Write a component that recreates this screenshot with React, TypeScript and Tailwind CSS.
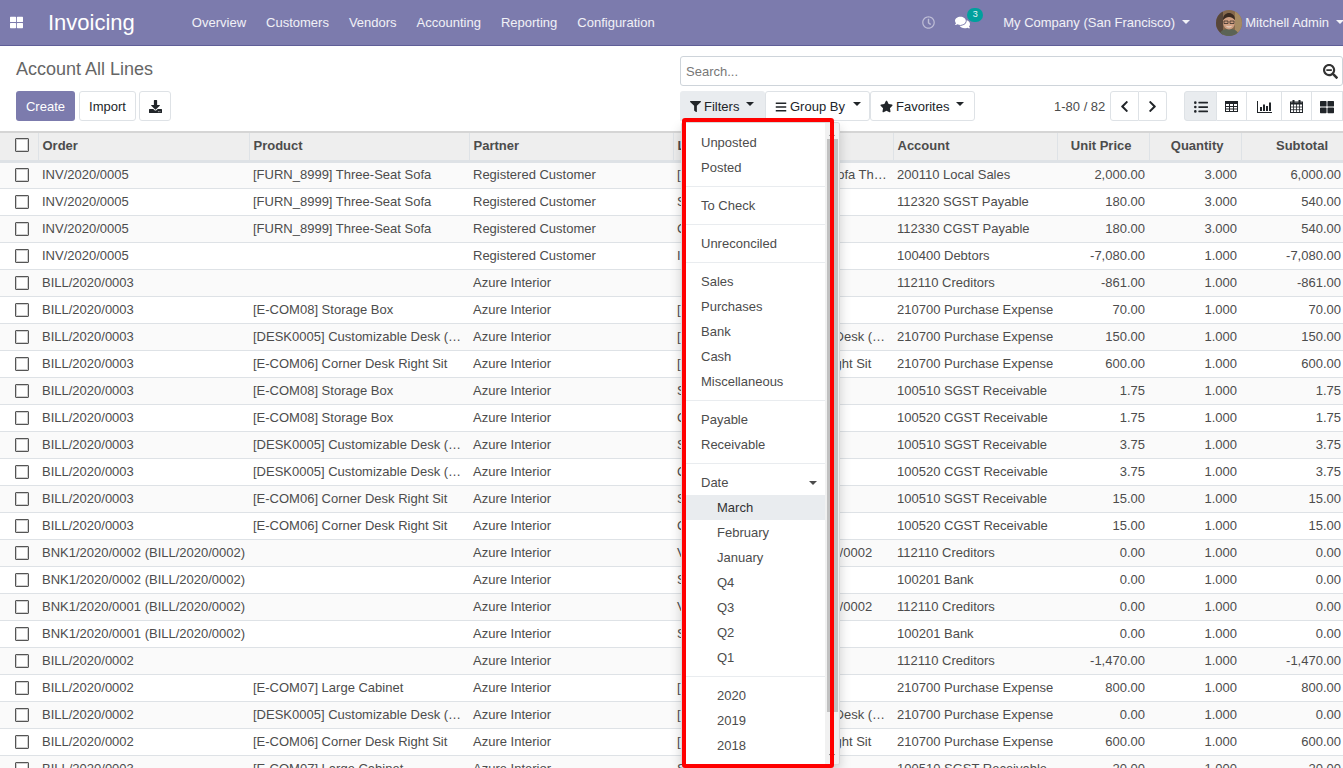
import {
  FaThLarge,
  FaRegClock,
  FaComments,
  FaDownload,
  FaSearchMinus,
  FaFilter,
  FaBars,
  FaStar,
  FaChevronLeft,
  FaChevronRight,
  FaListUl,
} from "react-icons/fa";

const navItems = ["Overview", "Customers", "Vendors", "Accounting", "Reporting", "Configuration"];

const sofa = "[FURN_8999] Three-Seat Sofa";
const box = "[E-COM08] Storage Box";
const desk = "[DESK0005] Customizable Desk (CONFIG)";
const corner = "[E-COM06] Corner Desk Right Sit";
const cabinet = "[E-COM07] Large Cabinet";
const reg = "Registered Customer";
const azure = "Azure Interior";
const inv = "INV/2020/0005";
const b3 = "BILL/2020/0003";
const b2 = "BILL/2020/0002";
const pay2 = "BNK1/2020/0002 (BILL/2020/0002)";
const pay1 = "BNK1/2020/0001 (BILL/2020/0002)";
const sgstR = "100510 SGST Receivable";
const cgstR = "100520 CGST Receivable";
const purch = "210700 Purchase Expense";
const cred = "112110 Creditors";
const bank = "100201 Bank";
const vendorPay = "Vendor Payment: BILL/2020/0002";

const rows = [
  [inv, sofa, reg, sofa + " Three Seater", "200110 Local Sales", "2,000.00", "3.000", "6,000.00"],
  [inv, sofa, reg, "SGST Sale", "112320 SGST Payable", "180.00", "3.000", "540.00"],
  [inv, sofa, reg, "CGST Sale", "112330 CGST Payable", "180.00", "3.000", "540.00"],
  [inv, "", reg, "INV/2020/0005", "100400 Debtors", "-7,080.00", "1.000", "-7,080.00"],
  [b3, "", azure, "", cred, "-861.00", "1.000", "-861.00"],
  [b3, box, azure, box, purch, "70.00", "1.000", "70.00"],
  [b3, desk, azure, desk, purch, "150.00", "1.000", "150.00"],
  [b3, corner, azure, corner, purch, "600.00", "1.000", "600.00"],
  [b3, box, azure, "SGST", sgstR, "1.75", "1.000", "1.75"],
  [b3, box, azure, "CGST", cgstR, "1.75", "1.000", "1.75"],
  [b3, desk, azure, "SGST", sgstR, "3.75", "1.000", "3.75"],
  [b3, desk, azure, "CGST", cgstR, "3.75", "1.000", "3.75"],
  [b3, corner, azure, "SGST", sgstR, "15.00", "1.000", "15.00"],
  [b3, corner, azure, "CGST", cgstR, "15.00", "1.000", "15.00"],
  [pay2, "", azure, vendorPay, cred, "0.00", "1.000", "0.00"],
  [pay2, "", azure, "SGST", bank, "0.00", "1.000", "0.00"],
  [pay1, "", azure, vendorPay, cred, "0.00", "1.000", "0.00"],
  [pay1, "", azure, "SGST", bank, "0.00", "1.000", "0.00"],
  [b2, "", azure, "", cred, "-1,470.00", "1.000", "-1,470.00"],
  [b2, cabinet, azure, cabinet, purch, "800.00", "1.000", "800.00"],
  [b2, desk, azure, desk, purch, "0.00", "1.000", "0.00"],
  [b2, corner, azure, corner, purch, "600.00", "1.000", "600.00"],
  [b3, cabinet, azure, "SGST", sgstR, "20.00", "1.000", "20.00"],
];

const menuGroups = [
  ["Unposted", "Posted"],
  ["To Check"],
  ["Unreconciled"],
  ["Sales", "Purchases", "Bank", "Cash", "Miscellaneous"],
  ["Payable", "Receivable"],
];

const dateOptions = ["March", "February", "January", "Q4", "Q3", "Q2", "Q1"];
const years = ["2020", "2019", "2018"];

function Caret() {
  return <span className="block w-0 h-0 border-x-[4px] border-t-[4px] border-x-transparent border-t-current" />;
}

function Checkbox() {
  return <span className="block w-[14px] h-[14px] border border-[#555] rounded-[1px] bg-white ml-[15px] shadow-[inset_0_0_0_1px_#cfcfcf]" />;
}

function Avatar() {
  return (
    <svg width="26" height="26" viewBox="0 0 26 26" className="rounded-full">
      <rect width="26" height="26" fill="#86694c" />
      <rect x="0" y="0" width="7" height="26" fill="#57463a" />
      <rect x="19" y="0" width="7" height="26" fill="#a58a62" />
      <path d="M3 26c1-6 5-7 10-7s9 1 10 7z" fill="#5b6355" />
      <ellipse cx="13" cy="12.5" rx="6" ry="7" fill="#cf9f82" />
      <path d="M7 10c0-5 3-7 6-7s6 2 6 7c-2-2-4-3-6-3s-4 1-6 3z" fill="#3a2a20" />
      <path d="M8 11h4v2.5H8zM14 11h4v2.5h-4z" fill="none" stroke="#3a302a" strokeWidth="0.8" />
      <path d="M10.5 16.3c1.6 0.9 3.4 0.9 5 0" stroke="#f3e6dc" strokeWidth="0.9" fill="none" />
    </svg>
  );
}

function TableIcon() {
  return (
    <svg width="13" height="11" viewBox="0 0 13 11" fill="none" stroke="currentColor" strokeWidth="1">
      <rect x="0.5" y="0.5" width="12" height="10" />
      <path d="M0 2h13" strokeWidth="2" />
      <path d="M0 5.5h13M0 8h13M4.5 2v9M8.5 2v9" />
    </svg>
  );
}

function ChartIcon() {
  return (
    <svg width="15" height="12" viewBox="0 0 15 12" fill="currentColor">
      <path d="M0 0h1v11h14v1H0z" />
      <rect x="3" y="6" width="2" height="4" />
      <rect x="6" y="3.5" width="2" height="6.5" />
      <rect x="9" y="5" width="2" height="5" />
      <rect x="12" y="1.5" width="2" height="8.5" />
    </svg>
  );
}

function CalendarIcon() {
  return (
    <svg width="13" height="13" viewBox="0 0 13 13" fill="none" stroke="currentColor" strokeWidth="1">
      <rect x="0.5" y="2" width="12" height="10.5" />
      <path d="M0 3.5h13" strokeWidth="2" />
      <path d="M0 7h13M0 9.7h13M3.5 4v9M6.5 4v9M9.5 4v9" strokeWidth="0.8" />
      <rect x="2.5" y="0" width="2" height="3.5" fill="currentColor" stroke="none" />
      <rect x="8.5" y="0" width="2" height="3.5" fill="currentColor" stroke="none" />
    </svg>
  );
}

function FiltersMenu() {
  const item = "h-[25px] flex items-center pl-[19px] whitespace-nowrap";
  const sub = "h-[25px] flex items-center pl-[35px]";
  const divider = "h-px bg-[#e9ecef] my-[6px]";
  return (
    <div className="absolute left-[1px] top-[31px] w-[159px] h-[644px] z-10">
      <div className="absolute left-0 top-[0px] w-full h-[643px] bg-white border border-black/15 rounded-[3px] shadow-[0_6px_12px_rgba(0,0,0,0.18)] flex overflow-hidden text-[13px] text-[#4c4c4c]">
        <div className="w-[143px] pt-[7px] shrink-0">
          {menuGroups.map((g) => (
            <div key={g[0]}>
              {g.map((t) => (
                <div key={t} className={item}>
                  {t}
                </div>
              ))}
              <div className={divider} />
            </div>
          ))}
          <div className={item + " justify-between pr-[8px]"}>
            Date
            <Caret />
          </div>
          {dateOptions.map((t, i) => (
            <div key={t} className={sub + (i === 0 ? " bg-[#e9ecef] text-[#333]" : "")}>
              {t}
            </div>
          ))}
          <div className={divider} />
          {years.map((t) => (
            <div key={t} className={sub}>
              {t}
            </div>
          ))}
        </div>
        <div className="flex-1 bg-[#f1f1f1] relative flex flex-col items-center">
          <span className="mt-[9px] w-0 h-0 border-x-[3px] border-b-[4px] border-x-transparent border-b-[#777]" />
          <div className="absolute left-[2px] right-[1px] top-[16px] h-[573px] bg-[#c1c1c1]" />
          <span className="absolute bottom-[6px] w-0 h-0 border-x-[3px] border-t-[4px] border-x-transparent border-t-[#555]" />
        </div>
      </div>
      {/* red highlight drawn on top of the screenshot */}
      <div className="absolute left-[1px] top-[-4px] w-[152px] h-[650px] border-[4px] border-[#f00] rounded-[3px] pointer-events-none" />
    </div>
  );
}

export default function App() {
  const box2 = "h-[30px] flex items-center border border-[#dee2e6] text-[13px] text-[#212529] pt-[1px]";
  const btn = box2 + " justify-center bg-white";
  const drop = box2 + " bg-white pl-[9px] rounded-[3px] gap-[3px]";
  const th = "h-[29px] pb-[2px] px-1 font-bold text-[13px] text-[#4c4c4c] border-l border-[#dee2e6] first:border-l-0 text-left";
  return (
    <div className="relative w-[1343px] h-[768px] overflow-hidden bg-white [font-family:'Liberation_Sans',Arial,sans-serif] text-[13px] text-[#4c4c4c]">
      {/* top bar */}
      <nav className="h-[46px] bg-[#7c7bad] border-b border-[#5f5e97] flex items-center text-white">
        <FaThLarge className="ml-[10px] w-[13px] h-[13px]" />
        <span className="ml-[25px] text-[22px] leading-none">Invoicing</span>
        <div className="ml-[47px] flex">
          {navItems.map((n) => (
            <span key={n} className="px-[10px] text-[13px] text-white/90">
              {n}
            </span>
          ))}
        </div>
        <div className="ml-auto mr-[-1px] flex items-center text-white/90">
          <FaRegClock className="w-[13px] h-[13px] text-white/50" />
          <div className="relative ml-[20px] mr-[33px]">
            <FaComments className="w-[15px] h-[15px] text-white" />
            <span className="absolute left-[12px] top-[-7px] w-[16px] h-[14px] rounded-full bg-[#00a09d] text-[9px] flex items-center justify-center">
              3
            </span>
          </div>
          <span>My Company (San Francisco)</span>
          <span className="ml-[7px] mr-[26px] mb-[2px]">
            <Caret />
          </span>
          <Avatar />
          <span className="ml-[3px]">Mitchell Admin</span>
          <span className="ml-[7px] mb-[2px] w-[8px] overflow-hidden">
            <Caret />
          </span>
        </div>
      </nav>

      {/* control panel */}
      <div className="h-[85px] flex">
        <div className="w-[680px] pl-4 shrink-0">
          <h1 className="mt-[11px] h-[24px] text-[18px] leading-[24px] text-[#666] font-normal">Account All Lines</h1>
          <div className="mt-[10px] flex">
            <button className="h-[30px] w-[59px] pt-[1px] rounded-[3px] bg-[#7c7bad] text-white text-[13px]">Create</button>
            <button className={btn + " w-[57px] ml-[4px] rounded-[3px]"}>Import</button>
            <button className={btn + " w-[32px] ml-[3px] rounded-[3px]"}>
              <FaDownload className="w-[13px] h-[13px]" />
            </button>
          </div>
        </div>
        <div className="flex-1">
          <div className="mt-[10px] h-[30px] border border-[#ced4da] rounded-[3px] flex items-center pl-[5px] pr-[4px] pt-[1px] text-[#777]">
            <span className="flex-1">Search...</span>
            <FaSearchMinus className="w-[15px] h-[15px] text-[#333]" />
          </div>
          <div className="mt-[5px] flex items-center">
            <div className="relative">
              <button className="h-[30px] w-[85px] pl-[10px] pt-[1px] bg-[#e9ecef] rounded-t-[3px] flex items-center gap-[3px] text-[#212529]">
                <FaFilter className="w-[11px] h-[11px]" />
                Filters
                <span className="ml-[4px] mb-[6px]">
                  <Caret />
                </span>
              </button>
              <FiltersMenu />
            </div>
            <button className={drop + " w-[105px]"}>
              <FaBars className="w-[12px] h-[12px]" />
              Group By
              <span className="ml-[5px] mb-[6px]">
                <Caret />
              </span>
            </button>
            <button className={drop + " w-[105px]"}>
              <FaStar className="w-[13px] h-[13px]" />
              Favorites
              <span className="ml-[4px] mb-[6px]">
                <Caret />
              </span>
            </button>
            <span className="ml-[79px] mr-[5px] mt-[1px] w-[51px] whitespace-nowrap text-[#4c4c4c]">1-80 / 82</span>
            <button className={btn + " w-[29px] rounded-l-[3px]"}>
              <FaChevronLeft className="w-[11px] h-[13px]" />
            </button>
            <button className={btn + " w-[28px] rounded-r-[3px] border-l-0"}>
              <FaChevronRight className="w-[11px] h-[13px]" />
            </button>
            <div className="ml-[17px] flex">
              <button className={box2 + " justify-center bg-[#e9ecef] w-[33px] rounded-l-[3px]"}>
                <FaListUl className="w-[14px] h-[14px]" />
              </button>
              <button className={btn + " w-[30px] border-l-0"}>
                <TableIcon />
              </button>
              <button className={btn + " w-[35px] border-l-0"}>
                <ChartIcon />
              </button>
              <button className={btn + " w-[30px] border-l-0"}>
                <CalendarIcon />
              </button>
              <button className={btn + " w-[31px] border-l-0"}>
                <FaThLarge className="w-[14px] h-[14px]" />
              </button>
            </div>
          </div>
        </div>
      </div>

      {/* list */}
      <table className="table-fixed w-[1345px] border-collapse border-t-2 border-[#d5d5d5]">
        <colgroup>
          <col className="w-[38px]" />
          <col className="w-[211px]" />
          <col className="w-[220px]" />
          <col className="w-[204px]" />
          <col className="w-[220px]" />
          <col className="w-[164px]" />
          <col className="w-[92px]" />
          <col className="w-[92px]" />
          <col className="w-[104px]" />
        </colgroup>
        <thead>
          <tr className="bg-[#eeeeee] border-b-[3px] border-[#dee2e6]">
            <th className={th + " !px-0"}>
              <Checkbox />
            </th>
            <th className={th}>Order</th>
            <th className={th}>Product</th>
            <th className={th}>Partner</th>
            <th className={th}>Label</th>
            <th className={th}>Account</th>
            <th className={th + " !text-right !pr-[17px]"}>Unit Price</th>
            <th className={th + " !text-right !pr-[17px]"}>Quantity</th>
            <th className={th + " !text-right !pr-[17px]"}>Subtotal</th>
          </tr>
        </thead>
        <tbody>
          {rows.map((r, i) => (
            <tr key={i} className="h-[27px] border-b border-[#dee2e6] odd:bg-[#fafafa]">
              <td className="p-0">
                <Checkbox />
              </td>
              {r.map((c, j) => (
                <td key={j} className={"pl-1 truncate " + (j > 4 ? "text-right pr-1" : j === 0 || j === 4 ? "pr-0" : "pr-1")}>
                  {c}
                </td>
              ))}
            </tr>
          ))}
        </tbody>
      </table>
    </div>
  );
}
